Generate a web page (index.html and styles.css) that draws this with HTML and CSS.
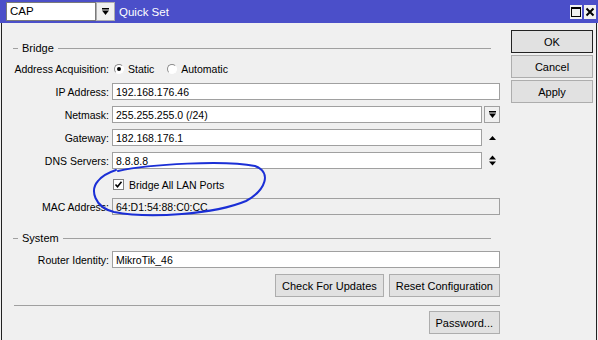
FILE: index.html
```html
<!DOCTYPE html>
<html lang="en">
<head>
    <meta charset="UTF-8">
    <title>Quick Set</title>
    <link rel="stylesheet" href="styles.css">
</head>
<body>
    <div class="window">
        <!-- Barra de titulo -->
        <div class="titlebar">
            <div class="combo">CAP</div>
            <div class="combo-btn">
                <svg width="9" height="9" viewBox="0 0 9 9"><rect x="1" y="1" width="7" height="1.5" fill="#000"/><path d="M1 3.5h7L4.5 8z" fill="#000"/></svg>
            </div>
            <span class="title">Quick Set</span>
            <div class="win-btns">
                <span class="win-btn"><svg width="12" height="12" viewBox="0 0 12 12"><rect x="1.5" y="1.5" width="9" height="9" fill="none" stroke="#000" stroke-width="1"/><rect x="1.5" y="1.5" width="9" height="1.5" fill="#000"/></svg></span>
                <span class="win-btn"><svg width="12" height="12" viewBox="0 0 12 12"><path d="M2.5 2.5l7 7M9.5 2.5l-7 7" stroke="#000" stroke-width="2"/></svg></span>
            </div>
        </div>

        <div class="content">
            <div class="form">
                <div class="group-head"><span class="dash"></span><span>Bridge</span><span class="line"></span></div>

                <div class="rows">
                    <div class="row">
                        <label>Address Acquisition:</label>
                        <div class="radios">
                            <span class="radio checked"></span><span>Static</span>
                            <span class="radio"></span><span>Automatic</span>
                        </div>
                    </div>
                    <div class="row">
                        <label>IP Address:</label>
                        <div class="field">192.168.176.46</div>
                    </div>
                    <div class="row">
                        <label>Netmask:</label>
                        <div class="with-ctrl">
                            <div class="field">255.255.255.0 (/24)</div>
                            <span class="ctrl boxed"><svg width="9" height="9" viewBox="0 0 9 9"><rect x="1" y="1" width="7" height="1.5" fill="#000"/><path d="M1 3.5h7L4.5 8z" fill="#000"/></svg></span>
                        </div>
                    </div>
                    <div class="row">
                        <label>Gateway:</label>
                        <div class="with-ctrl">
                            <div class="field">182.168.176.1</div>
                            <span class="ctrl"><svg width="9" height="9" viewBox="0 0 9 9"><path d="M1 7h7L4.5 3z" fill="#000"/></svg></span>
                        </div>
                    </div>
                    <div class="row">
                        <label>DNS Servers:</label>
                        <div class="with-ctrl">
                            <div class="field">8.8.8.8</div>
                            <span class="ctrl"><svg width="9" height="13" viewBox="0 0 9 13"><path d="M1 5.5h7L4.5 1.5z" fill="#000"/><path d="M1 7.5h7L4.5 11.5z" fill="#000"/></svg></span>
                        </div>
                    </div>
                    <div class="row">
                        <span></span>
                        <div class="check-line">
                            <span class="checkbox"><svg width="9" height="9" viewBox="0 0 9 9"><path d="M1.5 4.5l2 2.2 4-5" fill="none" stroke="#000" stroke-width="1.6"/></svg></span>
                            <span>Bridge All LAN Ports</span>
                        </div>
                    </div>
                    <div class="row">
                        <label>MAC Address:</label>
                        <div class="field disabled">64:D1:54:88:C0:CC</div>
                    </div>
                </div>

                <div class="group-head system"><span class="dash"></span><span>System</span><span class="line"></span></div>

                <div class="rows">
                    <div class="row">
                        <label>Router Identity:</label>
                        <div class="field">MikroTik_46</div>
                    </div>
                </div>

                <div class="actions">
                    <button class="btn">Check For Updates</button>
                    <button class="btn">Reset Configuration</button>
                </div>
                <div class="separator"></div>
                <div class="actions last">
                    <button class="btn">Password...</button>
                </div>
            </div>

            <div class="side">
                <button class="btn side-btn default">OK</button>
                <button class="btn side-btn">Cancel</button>
                <button class="btn side-btn">Apply</button>
            </div>
        </div>

        <!-- Anotacion a mano -->
        <svg class="scribble" width="598" height="340" viewBox="0 0 598 340">
            <path d="M118 171 C150 164, 225 160, 255 166 C272 172, 266 190, 246 201 C215 214, 150 219, 114 212 C94 207, 90 190, 98 181 C102 176, 110 172, 116 170" fill="none" stroke="#1b2fd6" stroke-width="2" stroke-linecap="round"/>
        </svg>
    </div>
</body>
</html>
```

FILE: styles.css
```css
/* Estilos basicos */
* {
    box-sizing: border-box;
}

body {
    margin: 0;
    padding: 0;
    font-family: "Liberation Sans", Arial, sans-serif;
    font-size: 10.5px;
    color: #000;
    background: #f0f0f0;
}

.window {
    position: relative;
    width: 598px;
    height: 340px;
    overflow: hidden;
    background: #f0f0f0;
}

/* Barra de titulo */
.titlebar {
    height: 23px;
    background: #4b4fc9;
    display: flex;
    align-items: center;
    padding: 0 2px 0 6px;
}

.combo {
    width: 90px;
    height: 19px;
    background: #fff;
    border: 1px solid #7a7a7a;
    padding: 2px 3px 0;
    font-size: 11.5px;
}

.combo-btn {
    width: 19px;
    height: 19px;
    background: #f0f0f0;
    border: 1px solid #adadad;
    display: flex;
    align-items: center;
    justify-content: center;
}

.title {
    color: #fff;
    font-size: 11.5px;
    margin-left: 4px;
}

.win-btns {
    margin-left: auto;
    display: flex;
    gap: 2px;
}

.win-btn {
    width: 12px;
    height: 14px;
    background: #f0f0f0;
    display: flex;
    align-items: center;
    justify-content: center;
}

/* Contenido */
.content {
    display: flex;
    height: 317px;
    border-left: 1px solid #222;
    border-right: 1px solid #222;
    margin: 0 1px;
}

.form {
    width: 498px;
    padding-left: 9px;
}

.group-head {
    display: flex;
    align-items: center;
    height: 14px;
    margin-top: 18px;
    margin-bottom: 5px;
    font-size: 11px;
}

.group-head.system {
    margin-top: 16px;
    margin-bottom: 6px;
}

.group-head .dash {
    width: 5px;
    height: 1px;
    background: #a0a0a0;
    margin: 0 4px 0 2px;
}

.group-head .line {
    flex: 1;
    height: 1px;
    background: #a0a0a0;
    margin: 0 9px 0 4px;
}

.rows {
    display: grid;
    row-gap: 6px;
}

.row {
    display: grid;
    grid-template-columns: 98px 1fr;
    column-gap: 3px;
    height: 17px;
    align-items: center;
}

.row label {
    text-align: right;
    white-space: nowrap;
}

.field {
    height: 17px;
    background: #fff;
    border: 1px solid #a0a0a0;
    padding: 1px 3px 0;
    line-height: 14px;
    white-space: nowrap;
}

.field.disabled {
    background: #f0f0f0;
}

.with-ctrl {
    display: flex;
    gap: 2px;
}

.with-ctrl .field {
    flex: 1;
}

.ctrl {
    width: 16px;
    height: 17px;
    display: flex;
    align-items: center;
    justify-content: center;
}

.ctrl.boxed {
    border: 1px solid #a0a0a0;
    background: #f0f0f0;
}

.radios {
    display: flex;
    align-items: center;
}

.radio {
    width: 10px;
    height: 10px;
    border-radius: 50%;
    background: #fff;
    border: 1px solid #8a8a8a;
    border-right-color: #fff;
    border-bottom-color: #fff;
    margin: 0 4px 0 2px;
    position: relative;
}

.radio + span + .radio {
    margin-left: 13px;
}

.radio.checked::after {
    content: "";
    position: absolute;
    left: 2px;
    top: 2px;
    width: 4px;
    height: 4px;
    border-radius: 50%;
    background: #000;
}

.check-line {
    display: flex;
    align-items: center;
    margin-top: 2px;
}

.checkbox {
    width: 11px;
    height: 11px;
    background: #fff;
    border: 1px solid #808080;
    margin: 0 5px 0 1px;
    display: flex;
    align-items: center;
    justify-content: center;
}

/* Botones */
.btn {
    font-family: inherit;
    font-size: 11px;
    height: 23px;
    padding: 0 6px;
    background: #e1e1e1;
    border: 1px solid #adadad;
    color: #000;
}

.actions {
    display: flex;
    justify-content: flex-end;
    gap: 5px;
    margin-top: 6px;
}

.actions.last {
    margin-top: 5px;
}

.separator {
    height: 1px;
    background: #a0a0a0;
    margin: 8px 0 0 3px;
}

.side {
    display: flex;
    flex-direction: column;
    gap: 2px;
    padding-top: 7px;
    margin-left: 11px;
}

.side-btn {
    width: 82px;
}

.side-btn.default {
    border: 1px solid #222;
}

/* Anotacion */
.scribble {
    position: absolute;
    left: 0;
    top: 0;
    pointer-events: none;
}
```
